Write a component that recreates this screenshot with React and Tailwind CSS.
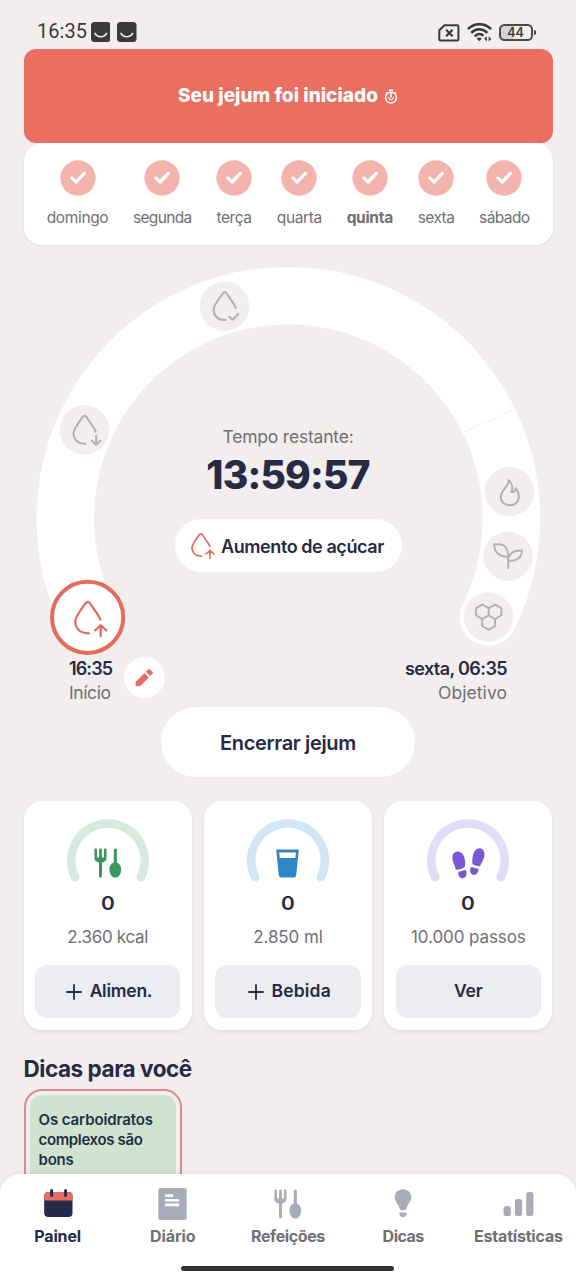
const DAYS = [
  { name: "domingo", cls: "w-[61px] tracking-[-0.35px]" },
  { name: "segunda", cls: "w-[57.5px] tracking-[-0.65px]" },
  { name: "terça", cls: "w-[35px] tracking-[-0.4px]" },
  { name: "quarta", cls: "w-[44.5px] tracking-[-0.4px]" },
  { name: "quinta", cls: "w-[45.5px] font-bold tracking-[-0.3px]" },
  { name: "sexta", cls: "w-[36px] tracking-[-0.55px]" },
  { name: "sábado", cls: "w-[49.5px] tracking-[-0.6px]" },
];

function Drop({ mark, sw = 2 }) {
  return (
    <g fill="none" stroke="currentColor" strokeWidth={sw} strokeLinecap="round" strokeLinejoin="round">
      <path d="M11.2 1.8C10.6 .3 9.8 -1.2 8.8 -2.8L1.9 -12.9Q.2 -15 -1.7 -12.9C-4.6 -9.2 -7.2 -5.3 -9.2 -1.9C-11.2 1.5 -11.4 4.9 -10.2 7.8C-8.6 11.7 -4.2 14 1 13.9" />
      {mark === "check" && <path d="M4.6 10.6L8 13.6L13.8 7.8" />}
      {mark === "down" && <path d="M11.7 6V14.7M7.4 10.9L11.7 14.9L16 10.9" />}
      {mark === "up" && <path d="M11.5 16.6V7M6.5 11.3L11.5 6.8L16.5 11.3" />}
    </g>
  );
}

function StatusBar() {
  return (
    <div className="flex h-[48px] shrink-0 items-end justify-between pb-[6px] pl-[37px] pr-[40.5px] text-[#3a3a3a]">
      <div className="flex items-center">
        <span className="w-[53.5px] font-[Roboto] text-[20px] leading-[21px] tracking-[0.05px]">16:35</span>
        {[0, 1].map((i) => (
          <svg key={i} className="mr-[7px]" width="19.5" height="20" viewBox="0 0 19.5 20">
            <rect width="19.5" height="20" rx="3.5" fill="#3a3a3a" />
            <path d="M4 11.4C6.3 15.8 13.2 15.8 15.5 11.4" fill="none" stroke="#f5f2f0" strokeWidth="1.6" strokeLinecap="round" />
          </svg>
        ))}
      </div>
      <div className="flex items-center">
        <svg width="22" height="18" viewBox="0 0 22 18" fill="none" stroke="currentColor">
          <path d="M6.5 1.2H19.3Q20.4 1.2 20.4 2.3V15.4Q20.4 16.5 19.3 16.5H2.4Q1.3 16.5 1.3 15.4V6.3Z" strokeWidth="2" strokeLinejoin="round" />
          <path d="M8.2 5.8L14.6 12.2M14.6 5.8L8.2 12.2" strokeWidth="2.2" />
        </svg>
        <svg className="ml-[7px]" width="25" height="19" viewBox="0 0 25 19" fill="none" stroke="currentColor">
          <path d="M.9 6.2C7.3 -.4 17.7 -.4 24.1 6.2M4.3 9.9C9 5.1 15.4 5.1 20.4 9.9M7.8 13.4C10.4 10.4 13.8 10.4 16.3 12.8" strokeWidth="2.6" />
          <path d="M9.6 15.5Q12.2 13.3 14.8 15.5L12.2 18.2Z" fill="currentColor" stroke="none" />
          <path d="M19.8 13.2V18.4L17.2 15.6M21.7 18.4V13.2L24.2 16Z" fill="currentColor" stroke="none" />
        </svg>
        <div className="ml-[7px] flex h-[17px] w-[34px] items-center justify-center rounded-[5.5px] border-2 border-[#4a4848] bg-linear-to-r from-[#d6d4d3] from-40% to-transparent to-40% font-[Inter] text-[12.5px] font-semibold leading-[12px]">
          44
        </div>
        <div className="ml-[1px] h-[5px] w-[2px] rounded-r-sm bg-[#3a3a3a]" />
      </div>
    </div>
  );
}

function Node({ x, y, children }) {
  return (
    <g transform={`translate(${x} ${y})`} className="text-[#b2aeb3]">
      <circle r="24.7" fill="#f2eeed" />
      {children}
    </g>
  );
}

function FastingRing() {
  return (
    <svg className="col-start-1 row-start-1" width="576" height="412" viewBox="0 245 576 412">
      <path d="M88.2 617A223 223 0 1 1 488.5 617" fill="none" stroke="#fff" strokeWidth="57.5" strokeLinecap="round" />
      <path d="M464 432L512.5 410.5" stroke="#f4f1f0" strokeWidth="1" />
      <Node x="224.6" y="306.2"><Drop mark="check" /></Node>
      <Node x="84.5" y="429.8"><Drop mark="down" /></Node>
      <Node x="509.5" y="491.5">
        <path transform="translate(-509.5 -491.5)" d="M508.7 480.2C509 486.5 500.8 489.7 500.8 497C500.8 502.2 504.9 505.3 509.8 505.3C514.8 505.3 518.8 502 518.8 497C518.8 493.2 517.5 490.2 515.7 488.3C515.4 490.7 514 492.2 511.3 492.1C513.2 488 512.3 483.2 508.7 480.2Z" fill="none" stroke="currentColor" strokeWidth="2" strokeLinejoin="round" />
      </Node>
      <Node x="508" y="556.3">
        <path transform="translate(-508 -556.3)" d="M494.2 544.3H499C505.4 544.3 508.3 549.3 508.2 556.6C499.7 557.3 494.2 552.6 494.2 544.3ZM522 550.6C521.8 557.6 516.8 561.2 508.2 560.8C508.4 553.9 513.3 549.6 522 550.6ZM508.2 556.6V568.3" fill="none" stroke="currentColor" strokeWidth="1.9" strokeLinejoin="round" strokeLinecap="round" />
      </Node>
      <Node x="488.5" y="617">
        <path d="M-6.2 -12.5L.2 -8.9V-1.7L-6.2 2L-12.4 -1.7V-8.9ZM6.6 -12.5L12.9 -8.9V-1.7L6.6 2L.2 -1.7V-8.9ZM-6.2 2L.2 -1.7L6.6 2V9L.2 12.7L-6.2 9Z" fill="none" stroke="currentColor" strokeWidth="1.9" strokeLinejoin="round" />
      </Node>
      <circle cx="87.6" cy="617.3" r="35.6" fill="#fff" stroke="#e26d5e" strokeWidth="4" />
      <g transform="translate(87.7 617.6) scale(1.13)" className="text-[#e26d5e]"><Drop mark="up" /></g>
    </svg>
  );
}

function ForkSpoon({ color }) {
  return (
    <svg width="28" height="30" viewBox="0 0 28 30" fill={color}>
      <path d="M.4 1.8a1.3 1.3 0 0 1 2.6 0V9.4H5.1V1.8a1.4 1.4 0 0 1 2.8 0V9.4H9.9V1.8a1.3 1.3 0 0 1 2.6 0V10.2C12.5 12.6 10.6 13.9 8 14.5V28a1.5 1.5 0 0 1 -3 0V14.5C2.3 13.9 .4 12.6 .4 10.2Z" />
      <path d="M19.8 1.9a1.5 1.5 0 0 1 3 0V14.6C25.4 15.4 27.2 18 27.2 21.4C27.2 25.7 24.5 29.5 21.3 29.5C18.1 29.5 15.4 25.7 15.4 21.4C15.4 18 17.2 15.4 19.8 14.6Z" />
    </svg>
  );
}

function Glass() {
  return (
    <svg width="23" height="29" viewBox="0 0 23 29">
      <path d="M1 .5H22Q22.8 .5 22.7 1.4L20.2 26Q20 28.5 17.5 28.5H5.5Q3 28.5 2.8 26L.3 1.4Q.2 .5 1 .5Z" fill="#2e85c9" />
      <path d="M3.2 3.5H19.9L19.4 9H3.7Z" fill="#fff" />
    </svg>
  );
}

function Footprints() {
  return (
    <svg width="33" height="31" viewBox="0 0 33 31" fill="#7a58d3">
      <path d="M3.6 20.7C2.4 16 .4 14.7 .4 9.6C.4 6 2.6 3.7 5.6 3.6C9.8 3.5 12.2 7.4 12.9 12C13.4 15.2 13 17.8 12.6 19.3Q9.5 21.6 4.8 21.8Q3.9 21.9 3.6 20.7ZM6.2 25.3Q6 23.9 7.4 23.6Q10.2 23.2 12.4 22.1Q13.9 21.5 14.3 23.1C15.1 26.4 14.3 29.6 11.3 30.3C8.6 30.8 6.4 28.2 6.2 25.3Z" />
      <path d="M20.4 15.4C20.3 13 20.1 10.6 21 7.4C22 3.2 24.2 .2 27.7 .3C31 .5 32.9 3.7 32.5 7.6C32 12 29.6 14.1 28.4 17.2Q27.9 18.5 26.5 18.1Q23.3 17.6 21.2 16.6Q20.4 16.2 20.4 15.4ZM18.4 20.3Q18.9 18.6 20.6 19.2Q22.8 20.2 25.3 20.4Q26.7 20.6 26.6 22.1C26.2 25 24 27.4 21.2 26.9C18.5 26.3 17.6 23.4 18.4 20.3Z" />
    </svg>
  );
}

function StatCard({ arc, icon, goal, goalCls, action, actionCls, plus }) {
  return (
    <div className="flex h-[229px] flex-1 flex-col items-center rounded-[18px] bg-white px-[11.5px] pb-[12px] pt-[18.5px] shadow-[0_2px_4px_rgba(60,40,40,0.08)]">
      <div className="grid h-[64px] w-[84px]">
        <svg className="col-start-1 row-start-1" width="84" height="64" viewBox="0 0 84 64">
          <path d="M9.3 58.2A36.8 36.8 0 1 1 74.7 58.2" fill="none" stroke={arc} strokeWidth="8.6" strokeLinecap="round" />
        </svg>
        <div className="z-10 col-start-1 row-start-1 mb-[5px] flex h-[30px] items-center justify-center self-end">{icon}</div>
      </div>
      <div className="mt-[8.5px] w-[14px] scale-x-110 text-center text-[19px] font-semibold leading-[24px]">0</div>
      <div className={`mt-[10px] whitespace-nowrap text-[17px] leading-[22px] text-[#706f75] ${goalCls}`}>{goal}</div>
      <button className={`mt-auto flex h-[53px] w-full items-center justify-center rounded-[12px] bg-[#ecedf1] pt-px text-[17.5px] font-semibold ${plus ? "pl-[3px]" : ""}`}>
        {plus && (
          <svg className="mr-[7.5px]" width="16" height="16" viewBox="0 0 16 16" stroke="#262a45" strokeWidth="1.8" strokeLinecap="round">
            <path d="M8 1V15M1 8H15" />
          </svg>
        )}
        <span className={actionCls}>{action}</span>
      </button>
    </div>
  );
}

const NAV = [
  {
    label: "Painel",
    cls: "text-[#262a4a] tracking-[-0.15px]",
    icon: (
      <svg className="ml-px" width="29" height="32" viewBox="0 0 29 32">
        <rect x=".2" y="4" width="28.3" height="25" rx="4" fill="#262a4a" />
        <path d="M.2 12.4V8Q.2 4 4.2 4H24.5Q28.5 4 28.5 8V12.4Z" fill="#e96c5f" />
        <path d="M7.6 2.6V7.6M21.6 2.6V7.6" stroke="#262a4a" strokeWidth="3" strokeLinecap="round" />
      </svg>
    ),
  },
  {
    label: "Diário",
    cls: "text-[#706f75] tracking-[-0.1px]",
    icon: (
      <svg width="29" height="32" viewBox="0 0 29 32">
        <rect x=".3" width="28.4" height="32" rx="2.5" fill="#a9abb8" />
        <path d="M7 6.2H15.2V9H7ZM7 11H21.2V13.6H7ZM7 15.6H21.2V18.2H7Z" fill="#fff" />
      </svg>
    ),
  },
  { label: "Refeições", cls: "text-[#706f75] tracking-[-0.4px]", icon: <ForkSpoon color="#a9abb8" /> },
  {
    label: "Dicas",
    cls: "text-[#706f75] tracking-[-0.5px]",
    icon: (
      <svg width="18" height="32" viewBox="0 0 18 32" fill="#a9abb8">
        <path d="M9 1.2C13.8 1.2 17.3 4.8 17.3 9.3C17.3 13.7 13.6 16.2 12.4 20.2Q11.9 22.2 10.4 22.2H7.6Q6.1 22.2 5.6 20.2C4.4 16.2 .7 13.7 .7 9.3C.7 4.8 4.2 1.2 9 1.2Z" />
        <path d="M6.6 24.4H11.4Q12.8 24.4 12.7 25.8C12.4 28 11 29.3 9 29.3C7 29.3 5.6 28 5.3 25.8Q5.2 24.4 6.6 24.4Z" />
      </svg>
    ),
  },
  {
    label: "Estatísticas",
    cls: "text-[#706f75] tracking-[-0.2px]",
    icon: (
      <svg width="31" height="32" viewBox="0 0 31 32" fill="#a9abb8">
        <rect x=".6" y="18" width="7.2" height="10" rx="2.6" />
        <rect x="11.9" y="11" width="7.2" height="17" rx="2.6" />
        <rect x="23.2" y="4" width="7.2" height="24" rx="2.6" />
      </svg>
    ),
  },
];

export default function App() {
  return (
    <div className="flex h-[1280px] w-[576px] flex-col overflow-hidden bg-[#f2eeed] font-[Inter,sans-serif] text-[#262a45]">
      <StatusBar />
      <main className="flex min-h-0 flex-1 flex-col overflow-hidden pt-[0.5px]">
        <div className="px-[23.5px]">
          <div className="flex h-[94px] items-center justify-center gap-[6px] rounded-[12px] bg-[#ea6f60] pt-[2px] text-white">
            <span className="text-[19px] font-extrabold tracking-[0.02px]">Seu jejum foi iniciado</span>
            <svg width="14" height="15" viewBox="0 0 14 15" fill="none" stroke="#fff" strokeWidth="1.5">
              <circle cx="7" cy="8.6" r="5.4" />
              <path d="M7 2.8V8.4M4.8 1.2H9.2M2 3.2L3.5 4.7M12 3.2L10.5 4.7" />
              <path d="M4.6 8Q4.8 10.9 7 10.9T9.4 8" strokeWidth="1" />
            </svg>
          </div>
          <div className="flex h-[102.5px] justify-between rounded-[18px] bg-white px-[23.5px] pt-[17.5px] shadow-[0_1px_3px_rgba(60,40,40,0.08)]">
            {DAYS.map((d) => (
              <div key={d.name} className={`flex flex-col items-center text-[15.5px] text-[#706f75] ${d.cls}`}>
                <svg width="36" height="36" viewBox="0 0 36 36">
                  <circle cx="18" cy="18" r="17.7" fill="#f4b4ae" />
                  <path d="M11.9 18.1L16.2 22L24.3 13.4" fill="none" stroke="#fff" strokeWidth="3.3" strokeLinecap="round" strokeLinejoin="miter" />
                </svg>
                <span className="mt-[12px] whitespace-nowrap leading-[20px]">{d.name}</span>
              </div>
            ))}
          </div>
        </div>

        <section className="grid h-[412px] shrink-0">
          <FastingRing />
          <div className="z-10 col-start-1 row-start-1 flex flex-col items-center pt-[180px]">
            <div className="text-[17.5px] leading-[24px] tracking-[-0.2px] text-[#706f75]">Tempo restante:</div>
            <div className="mt-[3px] text-[39px] font-extrabold leading-[46px] tracking-[-0.8px]">13:59:57</div>
            <div className="mt-[21px] flex h-[53px] w-[227px] items-center rounded-full bg-white pl-[15.5px]">
              <svg className="text-[#e26d5e]" width="25" height="28" viewBox="-12.8 -16.2 29.8 35">
                <Drop mark="up" sw="2.1" />
              </svg>
              <span className="ml-[6px] whitespace-nowrap pt-px text-[18px] font-semibold tracking-[-0.42px]">Aumento de açúcar</span>
            </div>
          </div>
        </section>

        <div className="flex h-[50px] shrink-0 justify-between px-[69px]">
          <div className="flex items-start">
            <div className="w-[55px]">
              <div className="text-[18px] font-semibold leading-[24px] tracking-[-0.9px]">16:35</div>
              <div className="text-[17.5px] leading-[24px] tracking-[-0.4px] text-[#706f75]">Início</div>
            </div>
            <div className="flex size-[41px] items-center justify-center rounded-full bg-white">
              <svg width="19" height="19" viewBox="0 0 19 19" fill="#e96c5f" stroke="#e96c5f" strokeWidth=".8" strokeLinejoin="round">
                <path d="M1 17.8V13.9L9.4 5.6L13.4 9.5L5.1 17.8Z" />
                <path d="M11.3 3.8L13.4 1.8Q14.2 1.1 15 1.8L17.2 3.9Q17.9 4.7 17.2 5.6L15.2 7.6Z" />
              </svg>
            </div>
          </div>
          <div className="text-right">
            <div className="text-[18px] font-semibold leading-[24px] tracking-[-0.6px]">sexta, 06:35</div>
            <div className="text-[17.5px] leading-[24px] tracking-[0.05px] text-[#706f75]">Objetivo</div>
          </div>
        </div>

        <button className="flex h-[70px] w-[254px] shrink-0 items-center justify-center self-center rounded-full bg-white pt-px text-[20px] font-semibold tracking-[-0.35px]">
          Encerrar jejum
        </button>

        <div className="mt-[23.5px] flex shrink-0 gap-[12px] px-[23.5px]">
          <StatCard arc="#d6e9df" icon={<ForkSpoon color="#39975c" />} goal="2.360 kcal" goalCls="tracking-[-0.3px]" action="Alimen." actionCls="tracking-[-0.25px]" plus />
          <StatCard arc="#d3e6f5" icon={<Glass />} goal="2.850 ml" goalCls="tracking-[-0.1px]" action="Bebida" actionCls="tracking-[0.15px]" plus />
          <StatCard arc="#e2dcf6" icon={<Footprints />} goal="10.000 passos" goalCls="tracking-[-0.1px]" action="Ver" actionCls="tracking-[-0.1px]" />
        </div>

        <section className="px-[23.5px] pt-[24px]">
          <h2 className="text-[22.5px] font-bold leading-[30px] tracking-[-0.45px]">Dicas para você</h2>
          <div className="mt-[5px] h-[150px] w-[158.5px] rounded-[18px] border-2 border-[#dc8c86] p-[4px]">
            <div className="h-full rounded-[12px] bg-[#d0e3d0] px-[9px] pt-[15px] text-[15px] font-semibold leading-[20.3px] text-[#202f45]">
              <div className="whitespace-nowrap tracking-[-0.1px]">Os carboidratos</div>
              <div className="whitespace-nowrap tracking-[-0.35px]">complexos são</div>
              <div className="tracking-[-0.2px]">bons</div>
            </div>
          </div>
        </section>
      </main>

      <nav className="z-10 flex h-[106px] shrink-0 flex-col items-center rounded-t-[20px] bg-white pt-[14px] shadow-[0_-1px_4px_rgba(60,40,40,0.07)]">
        <div className="grid w-full grid-cols-5">
          {NAV.map((n) => (
            <div key={n.label} className={`flex flex-col items-center text-[16px] font-bold ${n.cls}`}>
              <div className="flex h-[32px] items-center">{n.icon}</div>
              <span className="mt-[5px] whitespace-nowrap leading-[22px]">{n.label}</span>
            </div>
          ))}
        </div>
        <div className="mr-[1px] mt-[18.5px] h-[5px] w-[213px] rounded-full bg-[#323232]" />
      </nav>
    </div>
  );
}
